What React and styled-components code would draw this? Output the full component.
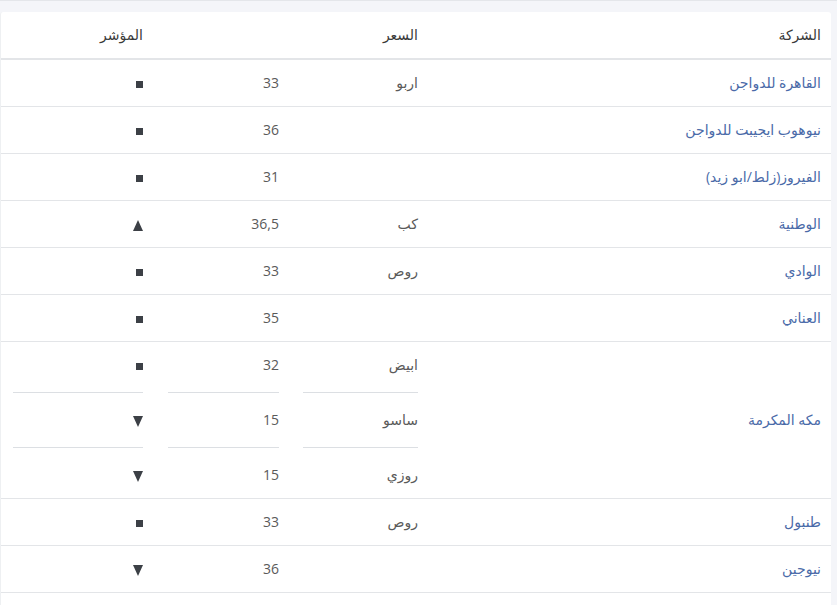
import React from "react";
import styled, { createGlobalStyle } from "styled-components";

const GlobalStyle = createGlobalStyle`
  html, body {
    margin: 0;
    padding: 0;
    background: #f4f5f9;
  }
`;

const Page = styled.div`
  direction: rtl;
  border-top: 1px solid #e4e6ea;
  padding: 11px 6px 0 0;
  font-family: "Open Sans", "DejaVu Sans", sans-serif;
  font-size: 14px;
  line-height: 22px;
  color: #5a5a5a;
`;

const Card = styled.div`
  background: #fff;
  border-radius: 3px 3px 0 0;
  border-left: 1px solid #eef0f2;
  overflow: hidden;
`;

const Table = styled.table`
  width: 100%;
  border-collapse: collapse;
  table-layout: fixed;

  th,
  td {
    padding: 12px 12px;
    text-align: right;
    vertical-align: middle;
  }

  th {
    font-weight: 400;
    color: #3a3a3a;
    border-bottom: 2px solid #e3e5e8;
  }

  td {
    border-bottom: 1px solid #e3e5e8;
  }

  th:first-child,
  td:first-child {
    padding-right: 10px;
  }

  th:nth-child(2),
  td:nth-child(2) {
    padding-right: 11px;
  }

  th:last-child,
  td:last-child {
    padding-right: 13px;
  }
`;

const Company = styled.a`
  color: #4a6aa8;
  text-decoration: none;
`;

const Item = styled.div`
  & + & {
    margin-top: 16px;
    padding-top: 16px;
    border-top: 1px solid #dcdfe3;
  }
`;

const Mark = styled.svg`
  display: inline-block;
  vertical-align: middle;
  fill: #3c4046;
`;

const Indicator = ({ kind }) => {
  if (kind === "up")
    return (
      <Mark width="10" height="11" viewBox="0 0 10 11">
        <polygon points="5,0 10,11 0,11" />
      </Mark>
    );
  if (kind === "down")
    return (
      <Mark width="10" height="11" viewBox="0 0 10 11">
        <polygon points="0,0 10,0 5,11" />
      </Mark>
    );
  return (
    <Mark width="7" height="7" viewBox="0 0 7 7" style={{ marginLeft: 2 }}>
      <rect x="0" y="0" width="7" height="7" />
    </Mark>
  );
};

const rows = [
  { name: "القاهرة للدواجن", items: [["اربو", "33", "flat"]] },
  { name: "نيوهوب ايجيبت للدواجن", items: [["", "36", "flat"]] },
  { name: "الفيروز(زلط/ابو زيد)", items: [["", "31", "flat"]] },
  { name: "الوطنية", items: [["كب", "36,5", "up"]] },
  { name: "الوادي", items: [["روص", "33", "flat"]] },
  { name: "العناني", items: [["", "35", "flat"]] },
  {
    name: "مكه المكرمة",
    items: [
      ["ابيض", "32", "flat"],
      ["ساسو", "15", "down"],
      ["روزي", "15", "down"],
    ],
  },
  { name: "طنبول", items: [["روص", "33", "flat"]] },
  { name: "نيوجين", items: [["", "36", "down"]] },
  { name: "", items: [["", "", null]] },
];

const App = () => {
  return (
    <Page>
      <GlobalStyle />
      <Card>
        <Table>
          <colgroup>
            <col style={{ width: 402 }} />
            <col style={{ width: 138 }} />
            <col style={{ width: 135 }} />
            <col />
          </colgroup>
          <thead>
            <tr>
              <th>الشركة</th>
              <th>السعر</th>
              <th></th>
              <th>المؤشر</th>
            </tr>
          </thead>
          <tbody>
            {rows.map((row, i) => (
              <tr key={i}>
                <td>
                  <Company href="#">{row.name}</Company>
                </td>
                <td>
                  {row.items.map((it, j) => (
                    <Item key={j}>{it[0] || "\u00a0"}</Item>
                  ))}
                </td>
                <td>
                  {row.items.map((it, j) => (
                    <Item key={j}>{it[1] || "\u00a0"}</Item>
                  ))}
                </td>
                <td>
                  {row.items.map((it, j) => (
                    <Item key={j}>
                      {it[2] ? <Indicator kind={it[2]} /> : "\u00a0"}
                    </Item>
                  ))}
                </td>
              </tr>
            ))}
          </tbody>
        </Table>
      </Card>
    </Page>
  );
};

export default App;
